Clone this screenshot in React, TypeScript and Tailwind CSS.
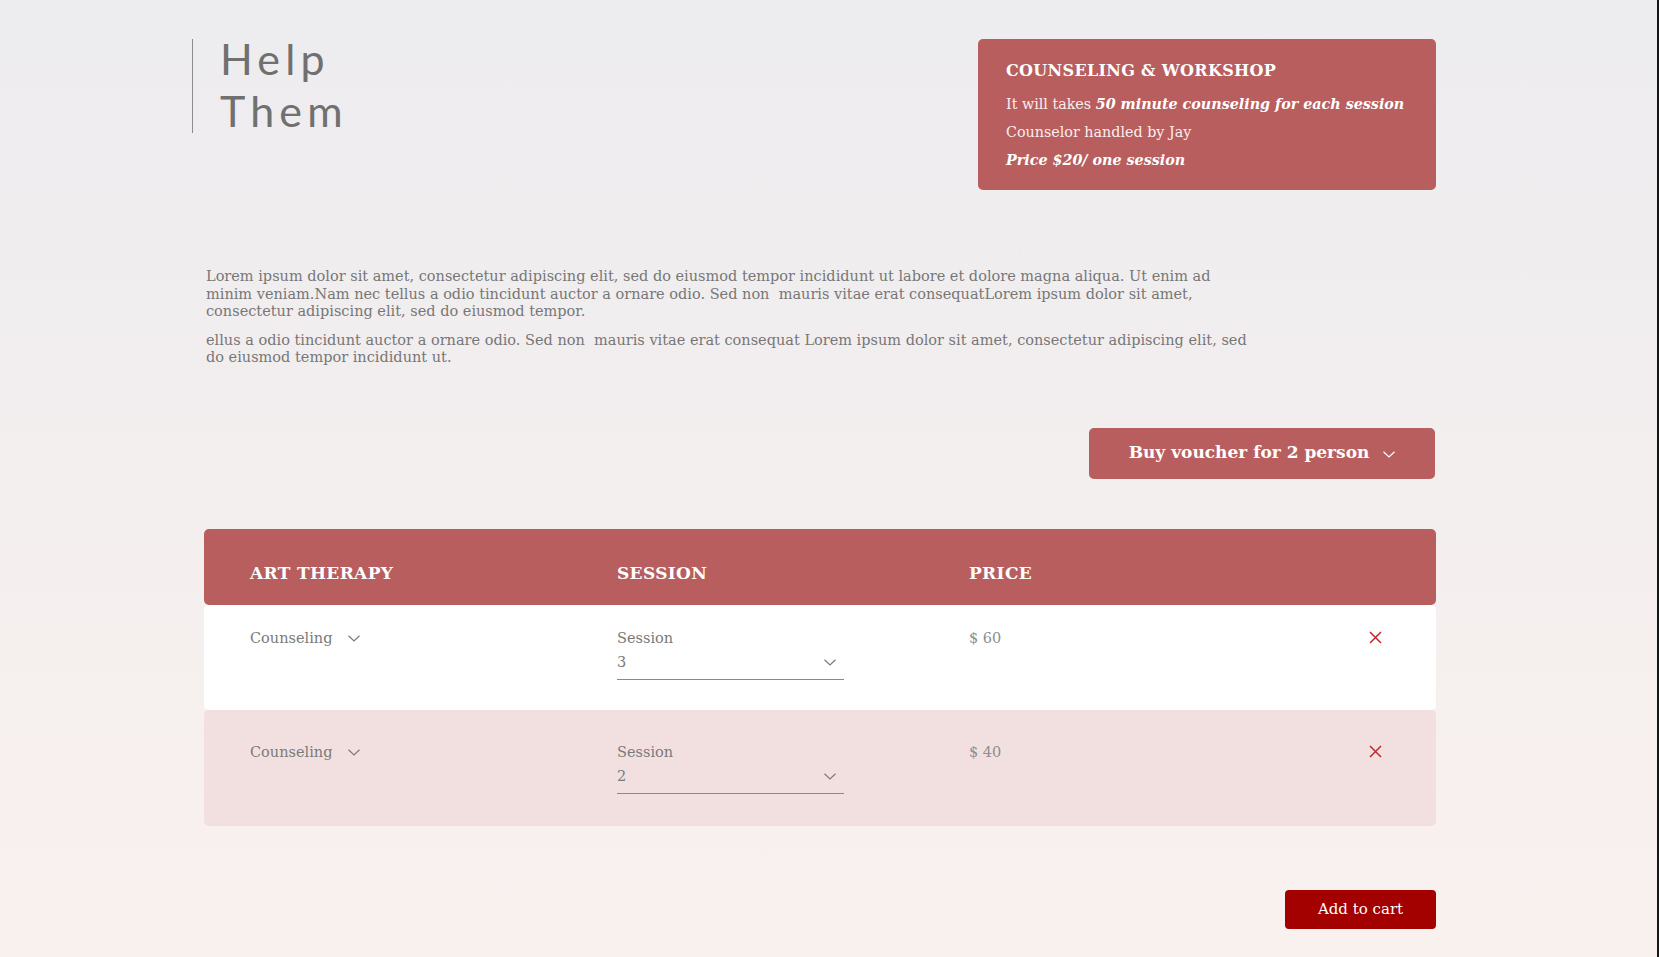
import React from "react";

const serif = "font-['DejaVu_Serif','Liberation_Serif',serif]";

function Chevron({ className = "" }: { className?: string }) {
  return (
    <svg width="12" height="7" viewBox="0 0 12 7" fill="none" className={className}>
      <path d="M0.5 0.75 L6 6 L11.5 0.75" stroke="currentColor" strokeWidth="1.2" />
    </svg>
  );
}

function RemoveIcon() {
  return (
    <svg width="13" height="13" viewBox="0 0 13 13" fill="none" className="text-[#c2272d]">
      <path d="M1 1 L12 12 M12 1 L1 12" stroke="currentColor" strokeWidth="1.5" />
    </svg>
  );
}

const ROWS = [
  { id: "r1", session: "3", price: "$ 60", bg: "bg-white", pad: "pt-[23px] h-[105px]" },
  { id: "r2", session: "2", price: "$ 40", bg: "bg-[#f2e0e0]", pad: "pt-[32px] h-[116px]" },
];

export default function App() {
  return (
    <div className={`min-h-screen w-full bg-gradient-to-b from-[#edecef] to-[#f9f1ee] border-r-2 border-[#161616] ${serif}`}>
      <div className="ml-[192px] w-[1244px] pt-[39px] pb-[27px]">
        {/* header: title + info card */}
        <div className="flex items-start justify-between">
          <div className="h-[94px] border-l border-[#8c8c8c] pl-[27px]">
            <h1 className="-mt-[6px] font-['Lato',sans-serif] text-[43px] tracking-[0.12em] text-[#707070]">
              <span className="block h-[52px] leading-[52px]">Help</span>
              <span className="block h-[52px] leading-[52px]">Them</span>
            </h1>
          </div>
          <div className="w-[458px] h-[151px] rounded-[5px] bg-[#b85e5e] pl-[28px] pt-[22px] text-white">
            <h2 className="text-[16px] leading-[20px] font-bold tracking-[0.02em]">COUNSELING &amp; WORKSHOP</h2>
            <div className="mt-[9px] text-[14.3px] leading-[28px] text-[#fbeeee]">
              <p>
                It will takes <b className="italic text-white">50 minute counseling for each session</b>
              </p>
              <p>Counselor handled by Jay</p>
              <p className="italic font-bold text-white">Price $20/ one session</p>
            </div>
          </div>
        </div>

        {/* description */}
        <div className="mt-[78px] ml-[14px] w-[1050px] text-[14.5px] leading-[17.5px] text-[#777777] space-y-[11px]">
          <p>
            Lorem ipsum dolor sit amet, consectetur adipiscing elit, sed do eiusmod tempor incididunt ut labore et dolore magna aliqua. Ut enim ad minim veniam.Nam nec tellus a odio tincidunt auctor a ornare odio. Sed non&nbsp; mauris vitae erat consequatLorem ipsum dolor sit amet, consectetur adipiscing elit, sed do eiusmod tempor.
          </p>
          <p>
            ellus a odio tincidunt auctor a ornare odio. Sed non&nbsp; mauris vitae erat consequat Lorem ipsum dolor sit amet, consectetur adipiscing elit, sed do eiusmod tempor incididunt ut.
          </p>
        </div>

        {/* voucher */}
        <div className="mt-[61px] flex justify-end">
          <button className="mr-[1px] flex h-[51px] w-[346px] items-center justify-center gap-[14px] rounded-[5px] bg-[#b85e5e] text-[17px] font-bold text-white">
            Buy voucher for 2 person
            <Chevron className="mt-[3px]" />
          </button>
        </div>

        {/* table */}
        <div className="mt-[50px] ml-[12px]">
          <div className="grid h-[76px] grid-cols-[367px_352px_1fr_auto] items-start rounded-[5px] bg-[#b85e5e] pl-[46px] pr-[54px] pt-[34px] text-[17px] leading-[20px] font-bold tracking-[0.02em] text-white">
            <span>ART THERAPY</span>
            <span>SESSION</span>
            <span>PRICE</span>
            <span className="w-[13px]" />
          </div>
          {ROWS.map((row) => (
            <div
              key={row.id}
              className={`grid grid-cols-[367px_352px_1fr_auto] items-start rounded-[5px] pl-[46px] pr-[54px] text-[14.5px] leading-[20px] text-[#7a7a7a] ${row.bg} ${row.pad}`}
            >
              <div className="flex items-center gap-[16px]">
                <span>Counseling</span>
                <Chevron className="mt-[2px]" />
              </div>
              <div className="w-[227px]">
                <div>Session</div>
                <div className="mt-[4px] flex items-center justify-between border-b border-[#8a8a8a] pb-[7px] pr-[8px]">
                  <span>{row.session}</span>
                  <Chevron className="mt-[2px]" />
                </div>
              </div>
              <span className="text-[#8e8e8e]">{row.price}</span>
              <span className="flex h-[20px] items-center">
                <RemoveIcon />
              </span>
            </div>
          ))}
        </div>

        <div className="mt-[64px] flex justify-end">
          <button className="h-[39px] w-[151px] rounded-[4px] bg-[#a30000] text-[15px] text-white">
            Add to cart
          </button>
        </div>
      </div>
    </div>
  );
}
